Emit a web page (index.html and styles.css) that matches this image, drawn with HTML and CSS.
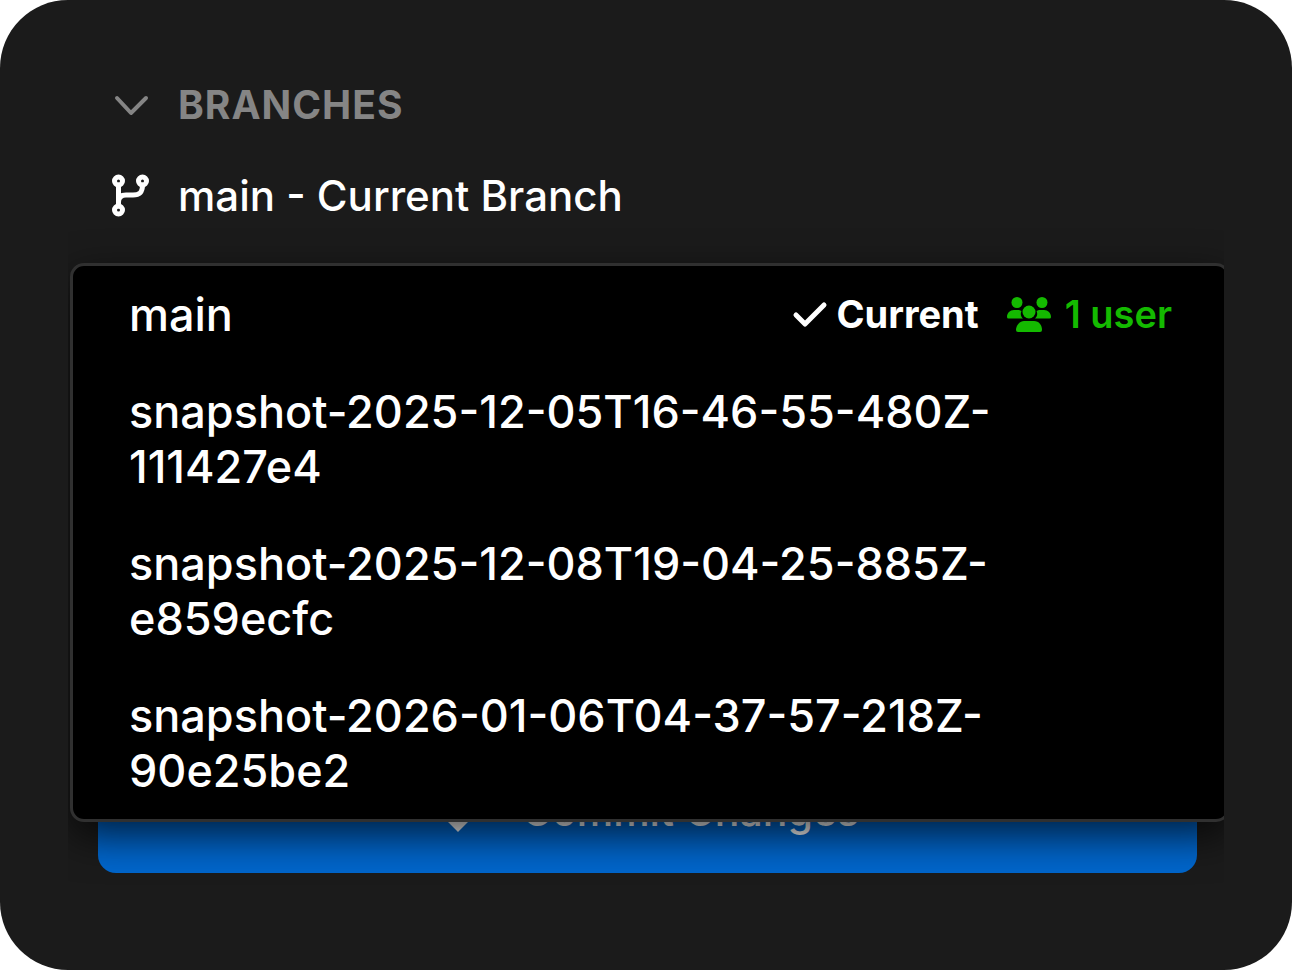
FILE: index.html
```
<!DOCTYPE html>
<html lang="en">

<head>
    <meta charset="UTF-8">
    <title>Branches</title>
    <link rel="stylesheet" href="styles.css">
</head>

<body>
    <div class="panel">
        <div class="sidebar">
            <button type="button" class="section-toggle" aria-expanded="true">
                <svg class="icon chevron" viewBox="0 0 42 42" aria-hidden="true">
                    <path d="M7 14 L21 29 L36 14" />
                </svg>
                <span>BRANCHES</span>
            </button>

            <button type="button" class="current-branch" aria-haspopup="true">
                <svg class="icon branch" viewBox="0 0 42 42" aria-hidden="true">
                    <circle cx="8.500" cy="6" r="4" />
                    <circle cx="32.500" cy="6" r="4" />
                    <circle cx="8.500" cy="35" r="4" />
                    <path d="M8.500 10 V31 M32.500 10 C32.500 18 29 20 23 20 H16 C11 20 8.500 22 8.500 27" />
                </svg>
                <span>main - Current Branch</span>
            </button>

            <div class="actions">
                <button type="button" class="commit-btn">
                    <svg class="commit-icon" viewBox="0 0 42 42" aria-hidden="true">
                        <path d="M16 2 H26 V21 H41 L21 41 L1 21 H16 Z" />
                    </svg>
                    <span>Commit Changes</span>
                </button>

                <div class="branch-menu">
                    <button type="button" class="branch-item">
                        <span class="branch-name">main</span>
                        <span class="current">
                            <svg class="check" viewBox="0 0 36 36" aria-hidden="true">
                                <path d="M4 18 L13 27 L32 8" />
                            </svg>
                            Current
                        </span>
                        <span class="users">
                            <svg class="people" viewBox="0 0 44 36" aria-hidden="true">
                                <circle cx="10" cy="5.500" r="5.500" />
                                <circle cx="35" cy="5.500" r="5.500" />
                                <circle cx="22" cy="15" r="6.500" />
                                <path d="M0 20 C0 16 3 13 7 13 H12 L14.500 14 C13 17 14 20 16 21.500 H1.500 Q0 21.500 0 20 Z" />
                                <path d="M44 20 C44 16 41 13 37 13 H32 L29.500 14 C31 17 30 20 28 21.500 H42.500 Q44 21.500 44 20 Z" />
                                <path d="M9 33 C9 28 13 24 17 24 H27 C32 24 35 28 35 33 Q35 35 33 35 H11 Q9 35 9 33 Z" />
                            </svg>
                            1 user
                        </span>
                    </button>
                    <button type="button" class="branch-item">
                        <span class="branch-name">snapshot-2025-12-05T16-46-55-480Z-111427e4</span>
                    </button>
                    <button type="button" class="branch-item">
                        <span class="branch-name">snapshot-2025-12-08T19-04-25-885Z-e859ecfc</span>
                    </button>
                    <button type="button" class="branch-item">
                        <span class="branch-name">snapshot-2026-01-06T04-37-57-218Z-90e25be2</span>
                    </button>
                </div>
            </div>
        </div>
    </div>
</body>

</html>
```
FILE: styles.css
```
* {
    box-sizing: border-box;
}

body {
    margin: 0;
    background-color: #fff;
    font-family: Inter, "Liberation Sans", sans-serif;
}

button {
    border: none;
    background: none;
    font-family: inherit;
    text-align: left;
    cursor: pointer;
}

.panel {
    min-height: 100vh;
    padding: 64px 68px;
    border-radius: 68px;
    background-color: #1b1b1b;
    color: #fff;
}

.sidebar {
    display: flex;
    flex-direction: column;
    padding-bottom: 32px;
    overflow: hidden;
}

.section-toggle,
.current-branch {
    display: flex;
    align-items: center;
    gap: 26px;
    padding: 0 42px;
    color: #fff;
    font-size: 42px;
    font-weight: 500;
    line-height: 82px;
}

.section-toggle {
    margin-bottom: 9px;
    color: #858585;
    font-size: 39px;
    font-weight: 700;
    letter-spacing: 1px;
}

.icon {
    width: 42px;
    height: 42px;
    fill: none;
    stroke: currentColor;
    stroke-width: 5;
    stroke-linecap: round;
    stroke-linejoin: round;
    overflow: visible;
}

.chevron {
    stroke-width: 4;
}

.actions {
    position: relative;
    padding: 512px 27px 0 30px;
}

.commit-btn {
    display: flex;
    align-items: center;
    justify-content: center;
    gap: 42px;
    width: 100%;
    height: 124px;
    border-radius: 18px;
    background-color: #0066cc;
    color: #fff;
    font-size: 41px;
    font-weight: 500;
}

.commit-icon {
    width: 44px;
    height: 44px;
    fill: currentColor;
}

/* menu opens over the commit button */
.branch-menu {
    position: absolute;
    top: 26px;
    left: 2px;
    right: -6px;
    border: 3px solid #303030;
    border-radius: 14px;
    background-color: #000;
    box-shadow: 0 14px 40px rgba(0, 0, 0, 0.7);
}

.branch-item {
    display: flex;
    align-items: center;
    width: 100%;
    padding: 21px 55px 21px 56px;
    color: #fff;
    font-size: 45px;
    font-weight: 450;
    line-height: 55px;
}

.branch-name {
    flex: 1;
    overflow-wrap: break-word;
}

.current,
.users {
    display: flex;
    align-items: center;
    gap: 8px;
    font-size: 38px;
    font-weight: 700;
}

.users {
    gap: 14px;
    margin-left: 28px;
    color: #14ba00;
    font-weight: 600;
}

.check {
    width: 36px;
    height: 36px;
    fill: none;
    stroke: currentColor;
    stroke-width: 5;
    stroke-linecap: round;
    stroke-linejoin: round;
}

.people {
    width: 44px;
    height: 36px;
    fill: currentColor;
}
```
